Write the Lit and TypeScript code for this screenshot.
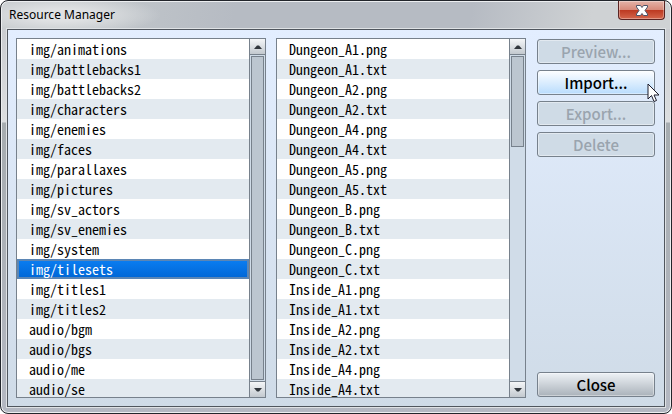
import { LitElement, html, css } from "lit";
import { customElement, property, state } from "lit/decorators.js";

const FOLDERS = [
  "img/animations", "img/battlebacks1", "img/battlebacks2", "img/characters",
  "img/enemies", "img/faces", "img/parallaxes", "img/pictures", "img/sv_actors",
  "img/sv_enemies", "img/system", "img/tilesets", "img/titles1", "img/titles2",
  "audio/bgm", "audio/bgs", "audio/me", "audio/se",
];

const FILES = [
  "Dungeon_A1", "Dungeon_A2", "Dungeon_A4", "Dungeon_A5", "Dungeon_B",
  "Dungeon_C", "Inside_A1", "Inside_A2", "Inside_A4",
].flatMap((name) => [`${name}.png`, `${name}.txt`]);

@customElement("resource-list")
export class ResourceList extends LitElement {
  @property({ attribute: false }) items: string[] = [];
  @property() label = "";
  @property() selected = "";
  @property({ type: Number }) thumb = 100;

  static styles = css`
    :host {
      display: flex;
      min-width: 0;
      min-height: 0;
      overflow: hidden;
      box-sizing: border-box;
      border: 1px solid #77818c;
      background: #fff;
    }
    .items {
      flex: 1;
      min-width: 0;
      margin: 0;
      padding: 0;
      list-style: none;
      overflow: hidden;
      font: 14px/20px "Noto Sans CJK JP", monospace;
      font-feature-settings: "hwid";
      color: #000;
    }
    .item {
      box-sizing: border-box;
      height: 20px;
      padding: 0 12px;
      white-space: pre;
    }
    .item:nth-child(even) {
      background: #e3eaf0;
    }
    .item.selected {
      padding: 0 10px;
      border: 2px solid #5b86b5;
      line-height: 16px;
      background: linear-gradient(#0a7cf0, #0068d8);
      color: #fff;
    }
    .scroll {
      display: flex;
      flex-direction: column;
      width: 15px;
      border-left: 1px solid #77818c;
      background: #d0dce8;
    }
    .arrow {
      display: grid;
      place-items: center;
      height: 16px;
      padding: 0;
      border: 0 solid #77818c;
      background: linear-gradient(#f4f6f8, #c3c9cf);
    }
    .arrow.up {
      border-bottom-width: 1px;
    }
    .arrow.down {
      border-top-width: 1px;
    }
    .track {
      flex: 1;
      min-height: 0;
      padding: 1px;
    }
    .thumb {
      box-sizing: border-box;
      border: 1px solid #77818c;
      background: #bcc6d0;
    }
    svg {
      display: block;
    }
  `;

  render() {
    return html`
      <ul class="items" role="listbox" aria-label=${this.label}>
        ${this.items.map((item) => html`<li
          class="item ${item === this.selected ? "selected" : ""}"
          role="option"
          aria-selected=${item === this.selected}
        >${item}</li>`)}
      </ul>
      <div class="scroll">
        <button class="arrow up" aria-label="Scroll up">
          <svg width="8" height="4" viewBox="0 0 8 4"><path d="M0 4L3 0.5H5L8 4Z" fill="#30363c" /></svg>
        </button>
        <div class="track"><div class="thumb" style="height:${this.thumb}%"></div></div>
        <button class="arrow down" aria-label="Scroll down">
          <svg width="8" height="4" viewBox="0 0 8 4"><path d="M0 0H8L5 3.5H3Z" fill="#30363c" /></svg>
        </button>
      </div>
    `;
  }
}

@customElement("app-root")
export class AppRoot extends LitElement {
  @state() private folder = "img/tilesets";

  static styles = css`
    :host {
      display: block;
      background: #fff;
    }
    .window {
      position: relative;
      display: flex;
      flex-direction: column;
      box-sizing: border-box;
      height: 100vh;
      padding: 0 6px 6px;
      border: 1px solid #22252b;
      border-radius: 8px;
      background:
        radial-gradient(100px 20px at 60px 14px, #dfe1e3 30%, #dfe1e300),
        linear-gradient(100deg, #c4c9cc 10%, #b6bbc3 35%, #b6bbc3 70%, #cfd2d4 88%) top / 100% 28px no-repeat,
        linear-gradient(#c4c7cc, #dcdee0 121px, #a6acb0 122px, #b4b8c2);
      box-shadow: inset 0 0 0 1px #eceef0;
    }
    .titlebar {
      display: flex;
      justify-content: space-between;
      align-items: flex-start;
      height: 28px;
      flex: none;
    }
    .title {
      margin: 0;
      padding: 0 2px;
      font: 12px/28px "Noto Sans", sans-serif;
      color: #000;
    }
    .close-x {
      display: grid;
      place-items: center;
      width: 47px;
      height: 19px;
      padding: 0;
      border: 1px solid #5a2422;
      border-top: 0;
      border-radius: 0 0 4px 4px;
      background: linear-gradient(#e3b3a8, #d78a7a 48%, #bd3a22 52%, #d4664c);
      box-shadow: inset 0 0 0 1px #ffffff55;
    }
    .client {
      flex: 1;
      min-height: 0;
      display: flex;
      padding: 8px 9px 8px 8px;
      border: 1px solid #50565e;
      background: linear-gradient(#e3eeff, #cfdbe7);
      box-shadow: 0 0 0 1px #dfe2e5;
    }
    resource-list {
      flex: 1;
    }
    .files {
      margin: 0 11px 0 10px;
    }
    .actions {
      display: flex;
      flex-direction: column;
      gap: 6px;
      width: 118px;
      padding: 1px 0;
    }
    .action {
      height: 25px;
      padding: 0;
      border: 1px solid #77818c;
      border-radius: 3px;
      background: linear-gradient(#eef2f6, #aab2ba);
      box-shadow: inset 0 0 0 1px #ffffff66;
      font: 500 15px/20px "Noto Sans CJK JP", sans-serif;
      color: #000;
    }
    .action:disabled {
      background: #cfdbe6;
      color: #9aa4ae;
    }
    .action.hover {
      background: linear-gradient(#fdfeff, #b9dcfd);
    }
    .action.bottom {
      margin-top: auto;
    }
    .cursor {
      position: absolute;
      left: 646px;
      top: 82px;
    }
    svg {
      display: block;
    }
  `;

  render() {
    return html`
      <main class="window">
        <header class="titlebar">
          <h1 class="title">Resource Manager</h1>
          <button class="close-x" aria-label="Close window">
            <svg width="12" height="11" viewBox="0 0 12 11">
              <path d="M.5.5H4.500L6 2.500 7.500.5H11.500V2L9 5.500 11.500 9V10.500H7.500L6 8.500 4.500 10.500H.5V9L3 5.500.5 2Z" fill="#fff" stroke="#4d5468" />
            </svg>
          </button>
        </header>
        <section class="client">
          <resource-list label="Folders" .items=${FOLDERS} .selected=${this.folder}></resource-list>
          <resource-list class="files" label="Files" .items=${FILES} .thumb=${28}></resource-list>
          <div class="actions">
            <button class="action" disabled>Preview...</button>
            <button class="action hover">Import...</button>
            <button class="action" disabled>Export...</button>
            <button class="action" disabled>Delete</button>
            <button class="action bottom">Close</button>
          </div>
        </section>
        <svg class="cursor" width="13" height="20" viewBox="0 0 13 20" aria-hidden="true">
          <path d="M1 1V16L4.500 12.500 7 18.500 9.500 17.500 7 12H12Z" fill="#fff" stroke="#1b1b2b" />
        </svg>
      </main>
    `;
  }
}
